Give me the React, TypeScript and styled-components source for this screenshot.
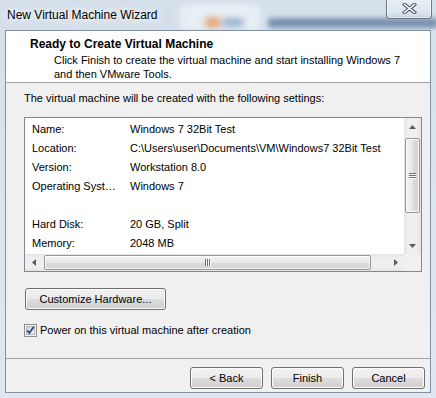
import React from 'react'
import styled, { createGlobalStyle } from 'styled-components'

const GlobalStyle = createGlobalStyle`
  html, body {
    margin: 0;
    padding: 0;
  }
  body {
    width: 436px;
    height: 398px;
    overflow: hidden;
    font-family: "Segoe UI", "Liberation Sans", Arial, sans-serif;
    font-size: 11px;
    color: #000;
  }
`

const Window = styled.div`
  width: 436px;
  height: 398px;
  display: flex;
  flex-direction: column;
  overflow: hidden;
  background: linear-gradient(180deg, #d4dfea 0%, #d9e3ee 30%, #dfe7f0 100%);
`

const TitleBar = styled.div`
  position: relative;
  flex: none;
  height: 30px;
  display: flex;
  align-items: flex-start;
  padding-left: 7px;
  overflow: hidden;
`

const TitleText = styled.span`
  position: relative;
  z-index: 2;
  margin-top: 8px;
  font-size: 12px;
  line-height: 15px;
  color: #000;
  text-shadow: 0 0 6px #fff, 0 0 10px #fff;
`

// blurred desktop content seen through the glass frame
const GlassBlob = styled.div<{ $left: number; $top: number; $w: number; $h: number; $color: string; $blur?: number }>`
  position: absolute;
  left: ${({ $left }) => $left}px;
  top: ${({ $top }) => $top}px;
  width: ${({ $w }) => $w}px;
  height: ${({ $h }) => $h}px;
  background: ${({ $color }) => $color};
  border-radius: 4px;
  filter: blur(${({ $blur }) => $blur ?? 3}px);
  opacity: 0.8;
`

const CloseButton = styled.div`
  position: relative;
  z-index: 2;
  margin-left: auto;
  margin-right: 4px;
  margin-top: -2px;
  width: 46px;
  height: 21px;
  box-sizing: border-box;
  border: 1px solid rgba(70, 82, 96, 0.75);
  border-top: none;
  border-radius: 0 0 4px 4px;
  background: linear-gradient(180deg, rgba(255, 255, 255, 0.55), rgba(220, 230, 240, 0.35));
  box-shadow: inset 0 0 0 1px rgba(255, 255, 255, 0.6);
  display: flex;
  align-items: center;
  justify-content: center;
  padding-top: 1px;
`

const Client = styled.div`
  flex: 1;
  margin: 0 5px 5px 5px;
  border: 1px solid #8392a3;
  background: #f0f0f0;
  display: flex;
  flex-direction: column;
  min-height: 0;
`

const Header = styled.div`
  flex: none;
  height: 52px;
  box-sizing: border-box;
  background: #fff;
  border-bottom: 1px solid #a0a0a0;
  padding: 6px 0 0 24px;
`

const HeaderTitle = styled.div`
  font-size: 12px;
  font-weight: bold;
  line-height: 15px;
`

const HeaderSub = styled.div`
  margin: 1px 0 0 24px;
  line-height: 14px;
`

const Body = styled.div`
  flex: 1;
  min-height: 0;
  padding: 8px 0 0 18px;
  display: flex;
  flex-direction: column;
  align-items: flex-start;
`

const Intro = styled.div`
  line-height: 14px;
`

const ListBox = styled.div`
  margin-top: 12px;
  width: 398px;
  height: 155px;
  box-sizing: border-box;
  border: 1px solid #828790;
  background: #fff;
  display: grid;
  grid-template-columns: 1fr 17px;
  grid-template-rows: 1fr 17px;
`

const ListContent = styled.div`
  overflow: hidden;
  padding-top: 2px;
`

const Row = styled.div`
  display: grid;
  grid-template-columns: 100px auto;
  height: 19px;
  line-height: 19px;
  white-space: nowrap;
`

const Label = styled.div`
  padding: 0 6px 0 7px;
  overflow: hidden;
  text-overflow: ellipsis;
`

const Value = styled.div`
  padding-left: 5px;
`

const VScroll = styled.div`
  display: flex;
  flex-direction: column;
  background: linear-gradient(90deg, #e4e4e4 0%, #efefef 25%, #efefef 75%, #e6e6e6 100%);
`

const HScroll = styled.div`
  display: flex;
  background: linear-gradient(180deg, #e4e4e4 0%, #efefef 25%, #efefef 75%, #e6e6e6 100%);
`

const Corner = styled.div`
  background: #f0f0f0;
`

const ScrollButton = styled.div`
  flex: none;
  width: 17px;
  height: 17px;
  display: flex;
  align-items: center;
  justify-content: center;
`

const Track = styled.div<{ $horizontal?: boolean }>`
  flex: 1;
  display: flex;
  flex-direction: ${({ $horizontal }) => ($horizontal ? 'row' : 'column')};
`

const Thumb = styled.div<{ $horizontal?: boolean; $offset: number; $size: number }>`
  box-sizing: border-box;
  border: 1px solid #979797;
  border-radius: 2px;
  display: flex;
  align-items: center;
  justify-content: center;
  box-shadow: inset 0 0 0 1px rgba(255, 255, 255, 0.7);
  ${({ $horizontal, $offset, $size }) =>
    $horizontal
      ? `
    margin: 0 0 0 ${$offset}px;
    width: ${$size}px;
    height: 15px;
    align-self: center;
    background: linear-gradient(180deg, #f3f3f3 0%, #e8e8e8 50%, #dadada 51%, #d6d6d6 100%);
  `
      : `
    margin: ${$offset}px 0 0 1px;
    height: ${$size}px;
    width: 15px;
    background: linear-gradient(90deg, #f3f3f3 0%, #e8e8e8 50%, #dadada 51%, #d6d6d6 100%);
  `}
`

const Grip = styled.div<{ $horizontal?: boolean }>`
  display: flex;
  flex-direction: ${({ $horizontal }) => ($horizontal ? 'row' : 'column')};
  gap: 1px;
`

const GripLine = styled.div<{ $horizontal?: boolean }>`
  background: #6f6f6f;
  box-shadow: ${({ $horizontal }) => ($horizontal ? '1px 0 0 #fff' : '0 1px 0 #fff')};
  width: ${({ $horizontal }) => ($horizontal ? '1px' : '7px')};
  height: ${({ $horizontal }) => ($horizontal ? '7px' : '1px')};
`

const PushButton = styled.button<{ $width: number }>`
  box-sizing: border-box;
  width: ${({ $width }) => $width}px;
  height: 22px;
  padding: 0;
  border: 1px solid #707070;
  border-radius: 3px;
  background: linear-gradient(180deg, #f2f2f2 0%, #ebebeb 48%, #dddddd 52%, #cfcfcf 100%);
  box-shadow: inset 0 0 0 1px #fbfbfb;
  font-family: inherit;
  font-size: 11px;
  color: #000;
  line-height: 18px;
`

const CustomizeButton = styled(PushButton)`
  margin-top: 16px;
  margin-left: 1px;
`

const CheckRow = styled.label`
  margin-top: 13px;
  display: flex;
  align-items: center;
  gap: 3px;
  line-height: 14px;
`

const Footer = styled.div`
  flex: none;
  border-top: 1px solid #a0a0a0;
  padding: 8px 5px 3px 0;
  display: flex;
  justify-content: flex-end;
  gap: 8px;
`

const settings = [
  { label: 'Name:', value: 'Windows 7 32Bit Test' },
  { label: 'Location:', value: 'C:\\Users\\user\\Documents\\VM\\Windows7 32Bit Test' },
  { label: 'Version:', value: 'Workstation 8.0' },
  { label: 'Operating System:', value: 'Windows 7' },
  { label: '', value: '' },
  { label: 'Hard Disk:', value: '20 GB, Split' },
  { label: 'Memory:', value: '2048 MB' },
]

function Arrow({ dir }: { dir: 'up' | 'down' | 'left' | 'right' }) {
  const vertical = dir === 'up' || dir === 'down'
  const pts = {
    up: '0,4 3.5,0 7,4',
    down: '0,0 7,0 3.5,4',
    left: '4,0 4,7 0,3.5',
    right: '0,0 4,3.5 0,7',
  }[dir]
  return (
    <svg width={vertical ? 7 : 4} height={vertical ? 4 : 7} viewBox={vertical ? '0 0 7 4' : '0 0 4 7'}>
      <polygon points={pts} fill="#5c5c5c" />
    </svg>
  )
}

function CloseGlyph() {
  return (
    <svg width="15" height="11" viewBox="0 0 15 11">
      <path d="M2.5 1.5 L12.5 9.5 M12.5 1.5 L2.5 9.5" stroke="#4f5d6b" strokeWidth="3.6" strokeLinecap="square" />
      <path d="M2.5 1.5 L12.5 9.5 M12.5 1.5 L2.5 9.5" stroke="#fff" strokeWidth="1.6" strokeLinecap="square" />
    </svg>
  )
}

function CheckBox() {
  return (
    <svg width="13" height="13" viewBox="0 0 13 13">
      <defs>
        <linearGradient id="cbIn" x1="0" y1="0" x2="1" y2="1">
          <stop offset="0" stopColor="#cbcfd5" />
          <stop offset="1" stopColor="#f7f7f7" />
        </linearGradient>
      </defs>
      <rect x="0.5" y="0.5" width="12" height="12" fill="#f4f4f4" stroke="#8e8f8f" />
      <rect x="2.5" y="2.5" width="8" height="8" fill="url(#cbIn)" stroke="#b5b9bf" />
      <path d="M3.2 6.4 L5.4 9 L9.8 2.8" fill="none" stroke="#2b4a86" strokeWidth="1.8" />
    </svg>
  )
}

export default function App() {
  return (
    <>
      <GlobalStyle />
      <Window>
        <TitleBar>
          <GlassBlob $left={180} $top={4} $w={80} $h={26} $color="rgba(240,245,250,0.9)" />
          <GlassBlob $left={205} $top={17} $w={16} $h={11} $color="#e59a63" />
          <GlassBlob $left={222} $top={18} $w={22} $h={9} $color="#8aa6c4" />
          <GlassBlob $left={268} $top={18} $w={170} $h={10} $color="rgba(62,92,135,0.75)" $blur={2.5} />
          <TitleText>New Virtual Machine Wizard</TitleText>
          <CloseButton>
            <CloseGlyph />
          </CloseButton>
        </TitleBar>
        <Client>
          <Header>
            <HeaderTitle>Ready to Create Virtual Machine</HeaderTitle>
            <HeaderSub>
              Click Finish to create the virtual machine and start installing Windows 7
              <br />
              and then VMware Tools.
            </HeaderSub>
          </Header>
          <Body>
            <Intro>The virtual machine will be created with the following settings:</Intro>
            <ListBox>
              <ListContent>
                {settings.map((s, i) => (
                  <Row key={i}>
                    <Label>{s.label}</Label>
                    <Value>{s.value}</Value>
                  </Row>
                ))}
              </ListContent>
              <VScroll>
                <ScrollButton>
                  <Arrow dir="up" />
                </ScrollButton>
                <Track>
                  <Thumb $offset={3} $size={75}>
                    <Grip>
                      <GripLine />
                      <GripLine />
                      <GripLine />
                    </Grip>
                  </Thumb>
                </Track>
                <ScrollButton>
                  <Arrow dir="down" />
                </ScrollButton>
              </VScroll>
              <HScroll>
                <ScrollButton>
                  <Arrow dir="left" />
                </ScrollButton>
                <Track $horizontal>
                  <Thumb $horizontal $offset={2} $size={327}>
                    <Grip $horizontal>
                      <GripLine $horizontal />
                      <GripLine $horizontal />
                      <GripLine $horizontal />
                    </Grip>
                  </Thumb>
                </Track>
                <ScrollButton>
                  <Arrow dir="right" />
                </ScrollButton>
              </HScroll>
              <Corner />
            </ListBox>
            <CustomizeButton $width={141}>Customize Hardware...</CustomizeButton>
            <CheckRow>
              <CheckBox />
              Power on this virtual machine after creation
            </CheckRow>
          </Body>
          <Footer>
            <PushButton $width={73}>&lt; Back</PushButton>
            <PushButton $width={73}>Finish</PushButton>
            <PushButton $width={73}>Cancel</PushButton>
          </Footer>
        </Client>
      </Window>
    </>
  )
}
